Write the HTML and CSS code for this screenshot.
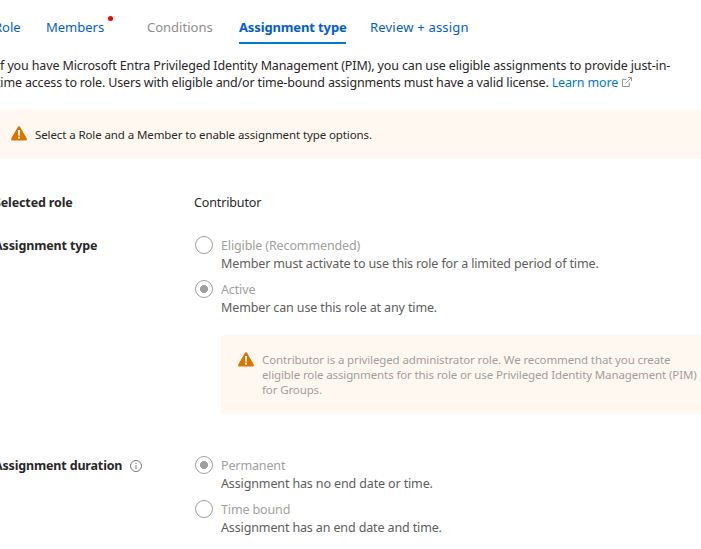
FILE: index.html
```
<!DOCTYPE html>
<html lang="en">
<head>
<meta charset="utf-8">
<title>Add role assignment</title>
<link rel="stylesheet" href="styles.css">
</head>
<body>
<svg class="defs" width="0" height="0">
  <symbol id="warning" viewBox="0 0 16 15">
    <path d="M6.8 1.1Q8-.8 9.2 1.1L15.7 12.5Q16.5 14.4 14.6 14.5H1.4Q-.5 14.4.3 12.5Z" fill="#db7500"/>
    <path d="M7 4h2l-.3 5.8H7.3Z" fill="#fff"/>
    <circle cx="8" cy="11.7" r="1.1" fill="#fff"/>
  </symbol>
</svg>
<main class="page">
  <nav class="tabs">
    <a class="tab tab-role">Role</a>
    <a class="tab tab-members">Members<i class="dot"></i></a>
    <a class="tab tab-conditions">Conditions</a>
    <a class="tab tab-active">Assignment type</a>
    <a class="tab tab-review">Review + assign</a>
  </nav>
  <p class="intro"><span class="intro-first">If you have Microsoft Entra Privileged Identity Management (PIM), you can use eligible assignments to provide just-in-</span><br><span class="intro-second">time access to role. Users with eligible and/or time-bound assignments must have a valid license. <a class="learn">Learn more</a></span><svg class="external" width="10" height="10" viewBox="0 0 11 11" fill="none" stroke="#888"><path d="M5 2.5H.5v8h7.5V6M6.5.5h4v4M10.3.7L3.8 7.2"/></svg></p>
  <div class="banner"><svg class="warn" width="16" height="15"><use href="#warning"/></svg><span class="banner-text">Select a Role and a Member to enable assignment type options.</span></div>
  <section class="row role-row">
    <h2 class="label">Selected role</h2>
    <div class="value">Contributor</div>
  </section>
  <section class="row type-row">
    <h2 class="label">Assignment type</h2>
    <div class="options">
      <div class="option"><i class="radio"></i><div><div class="name">Eligible (Recommended)</div><div class="desc">Member must activate to use this role for a limited period of time.</div></div></div>
      <div class="option"><i class="radio checked"></i><div><div class="name">Active</div><div class="desc">Member can use this role at any time.</div></div></div>
      <div class="notice"><svg class="warn" width="16" height="15"><use href="#warning"/></svg><div class="notice-text">Contributor is a privileged administrator role. We recommend that you create<br>eligible role assignments for this role or use Privileged Identity Management (PIM)<br>for Groups.</div></div>
    </div>
  </section>
  <section class="row duration-row">
    <h2 class="label label-duration">Assignment duration<svg class="info" width="12" height="12" viewBox="0 0 12 12" fill="none" stroke="#777"><circle cx="6" cy="6" r="5.5"/><path d="M6 5v4M6 3v1"/></svg></h2>
    <div class="options">
      <div class="option"><i class="radio checked"></i><div><div class="name">Permanent</div><div class="desc">Assignment has no end date or time.</div></div></div>
      <div class="option"><i class="radio"></i><div><div class="name">Time bound</div><div class="desc">Assignment has an end date and time.</div></div></div>
    </div>
  </section>
</main>
</body>
</html>
```
FILE: styles.css
```
* { box-sizing: border-box; }
body { margin: 0; background: #fff; color: #292827; overflow: hidden; font: 12.5px/18px "Noto Sans", "Open Sans", sans-serif; letter-spacing: -.13px; white-space: nowrap; }
.defs { position: absolute; }
.page { margin-left: -6px; height: 549px; overflow: hidden; }
.tabs { display: flex; height: 44px; padding-top: 18px; color: #015cda; font-size: 13px; letter-spacing: 0; }
.tab { position: relative; height: 26px; }
.tab-role { width: 52px; }
.tab-members { width: 101px; }
.tab-conditions { width: 92px; color: #8f8d8b; }
.tab-active { width: 107px; margin-right: 24px; font-weight: 700; border-bottom: 2px solid #0078d4; letter-spacing: -.13px; }
.tab-review { letter-spacing: .2px; }
.dot { position: absolute; left: 62px; top: -2px; width: 5px; height: 5px; border-radius: 50%; background: #f00; }
.intro { margin: 13px 0 0 2px; line-height: 17px; }
.intro-first { letter-spacing: -.135px; }
.intro-second { letter-spacing: -.165px; }
.learn { color: #0078d4; }
.external { margin-left: 4px; }
.banner { display: flex; height: 50px; margin-top: 18px; padding: 17px 0 0 17px; background: #fff8f1; font-size: 11.5px; letter-spacing: -.1px; }
.warn { flex: none; }
.banner-text { margin-left: 8px; }
.row { display: flex; }
.label { flex: none; width: 200px; margin: 0; font-size: 12.5px; line-height: 18px; font-weight: 700; }
.role-row { margin-top: 35px; height: 43px; }
.type-row { height: 220px; }
.options { flex: 1; }
.option { display: flex; height: 44px; }
.radio { flex: none; width: 18px; height: 18px; margin: -1px 8px 0 1px; border: 1px solid #a19f9d; border-radius: 50%; }
.checked { background: radial-gradient(circle, #a19f9d 3.7px, transparent 4.3px); }
.name { color: #a19f9d; }
.desc { color: #605e5c; }
.notice { display: flex; height: 79px; margin: 10px 0 0 27px; padding: 17px 0 0 17px; background: #fff8f1; border-radius: 2px 0 0 2px; color: #a19f9d; font-size: 11.5px; line-height: 15px; letter-spacing: -.12px; }
.notice-text { margin-left: 8px; }
.label-duration { letter-spacing: -.16px; }
.info { margin-left: 8px; vertical-align: -2px; }
```
